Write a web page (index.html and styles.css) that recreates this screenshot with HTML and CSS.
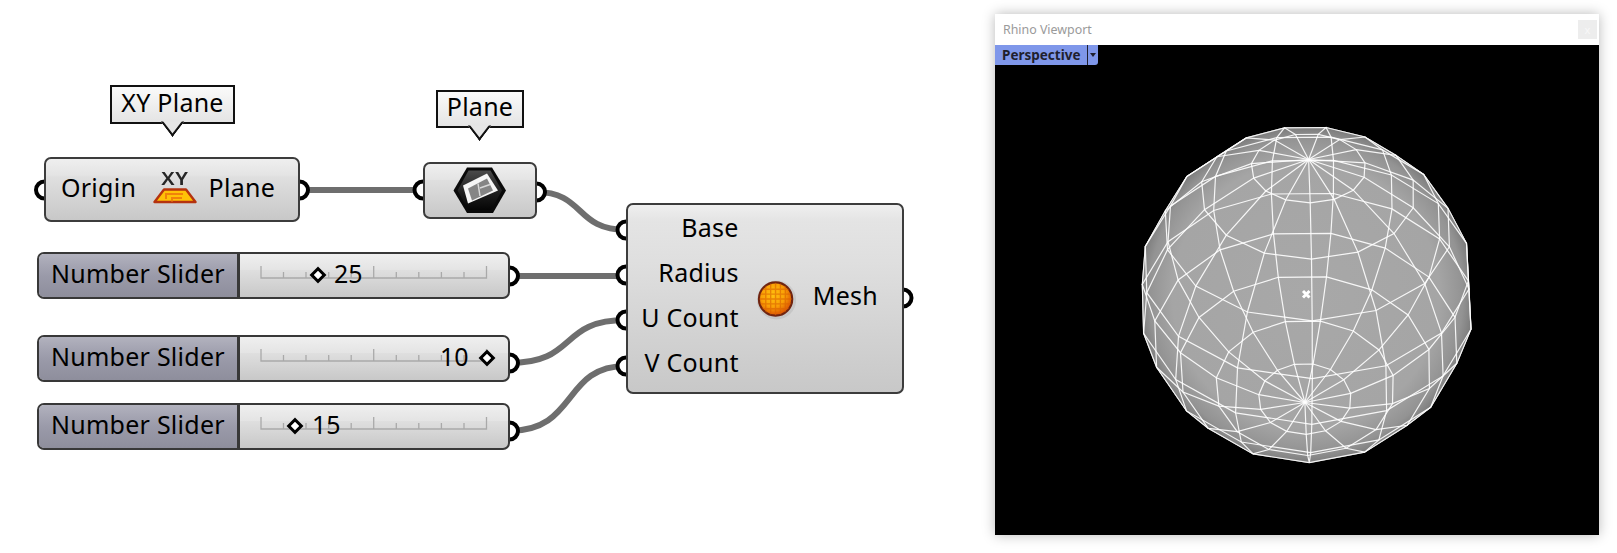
FILE: index.html
```html
<!DOCTYPE html>
<html lang="en">
<head>
<meta charset="utf-8">
<title>Grasshopper mesh sphere</title>
<link rel="stylesheet" href="styles.css">
</head>
<body>
<main class="canvas">
  <svg class="wires" width="960" height="553" viewBox="0 0 960 553">
    <g class="wire">
      <path d="M299 190H423"/>
      <path d="M536 192C585 192 575 230 626 230"/>
      <path d="M509 276H626"/>
      <path d="M509 363C578 363 558 320 626 320"/>
      <path d="M509 431C578 431 562 366 626 366"/>
    </g>
    <g class="grip">
      <circle cx="44.500" cy="190" r="8.500"/>
      <circle cx="299.500" cy="190" r="8.500"/>
      <circle cx="423" cy="190" r="8.500"/>
      <circle cx="536.500" cy="192" r="8.500"/>
      <circle cx="626" cy="230" r="8.500"/>
      <circle cx="626" cy="275" r="8.500"/>
      <circle cx="626" cy="320" r="8.500"/>
      <circle cx="626" cy="366" r="8.500"/>
      <circle cx="903" cy="298" r="8.500"/>
      <circle cx="509.500" cy="276" r="8.500"/>
      <circle cx="509.500" cy="363" r="8.500"/>
      <circle cx="509.500" cy="431" r="8.500"/>
    </g>
  </svg>

  <div class="tag tag-xy">XY Plane</div>
  <div class="tag tag-plane">Plane</div>

  <section class="node node-xy">
    <span class="lbl">Origin</span>
    <span class="xy-icon">
      <span class="xy-text">XY</span>
      <svg width="44" height="16" viewBox="0 0 44 16">
        <path d="M11 1.500H33L42.500 14H1.500Z" fill="#ffc107" stroke="#b5330f" stroke-width="2.400" stroke-linejoin="round"/>
        <path d="M13 11V6H30M19 13.500V10H29" fill="none" stroke="#f0820a" stroke-width="2"/>
      </svg>
    </span>
    <span class="lbl">Plane</span>
  </section>

  <section class="node node-plane">
    <svg width="54" height="50" viewBox="0 0 54 50">
      <defs>
        <linearGradient id="hexfill" x1="0" y1="0" x2="0" y2="1">
          <stop offset="0" stop-color="#4a4a4a"/>
          <stop offset="0.6" stop-color="#1c1c1c"/>
          <stop offset="1" stop-color="#050505"/>
        </linearGradient>
        <filter id="soft" x="-10%" y="-10%" width="120%" height="120%"><feGaussianBlur stdDeviation="0.600"/></filter>
      </defs>
      <path d="M14 1.500H39L53 24.500L40 47H14L0.500 24.500Z" fill="#0a0a0a"/>
      <path d="M15.500 4.500H37.500L49 24.500L38 44H15.500L4.500 24.500Z" fill="url(#hexfill)"/>
      <g filter="url(#soft)">
        <path d="M10 19.500L34 7.500L45 24.500L15 37.500Z" fill="#f6f6f6"/>
        <path d="M15 22.500L34 12.500L40 24.500L19 34.500Z" fill="#858585"/>
        <path d="M25 17.500L27 30M27 22L37 18.500" fill="none" stroke="#d8d8d8" stroke-width="1.500"/>
      </g>
    </svg>
  </section>

  <section class="node node-mesh">
    <div class="inputs">
      <span class="lbl">Base</span>
      <span class="lbl">Radius</span>
      <span class="lbl">U Count</span>
      <span class="lbl">V Count</span>
    </div>
    <svg class="mesh-icon" width="42" height="42" viewBox="0 0 42 42">
      <defs>
        <radialGradient id="orb" cx="42%" cy="38%" r="65%">
          <stop offset="0" stop-color="#ffc10f"/>
          <stop offset="0.55" stop-color="#f9a006"/>
          <stop offset="1" stop-color="#d84a03"/>
        </radialGradient>
        <filter id="gridblur" x="-10%" y="-10%" width="120%" height="120%"><feGaussianBlur stdDeviation="0.500"/></filter>
        <clipPath id="orbclip"><circle cx="21" cy="21" r="16.500"/></clipPath>
      </defs>
      <circle cx="22" cy="22" r="20" fill="#000" opacity="0.07"/>
      <circle cx="21" cy="21" r="17" fill="url(#orb)" stroke="#6f2410" stroke-width="2.200"/>
      <g clip-path="url(#orbclip)" filter="url(#gridblur)">
        <path d="M3 11H39M3 16H39M3 21H39M3 26H39M3 31H39M11 3V39M16 3V39M21 3V39M26 3V39M31 3V39" stroke="#d9610a" stroke-width="1.400" opacity="0.6"/>
      </g>
    </svg>
    <span class="lbl">Mesh</span>
  </section>

  <section class="node slider slider-a">
    <div class="slider-label">Number Slider</div>
    <div class="slider-track">
      <svg class="rail" width="230" height="16" viewBox="0 0 230 16"><path id="rail-ticks" d="M1 1V13H226.500V1M23.500 7V13M46 7V13M68.700 7V13M91.200 7V13M113.700 1V13M136.300 7V13M158.800 7V13M181.400 7V13M204 7V13"/></svg>
      <span class="knob knob-a"></span>
      <span class="value value-a">25</span>
    </div>
  </section>

  <section class="node slider slider-b">
    <div class="slider-label">Number Slider</div>
    <div class="slider-track">
      <svg class="rail" width="230" height="16" viewBox="0 0 230 16"><use href="#rail-ticks"/></svg>
      <span class="knob knob-b"></span>
      <span class="value value-b">10</span>
    </div>
  </section>

  <section class="node slider slider-c">
    <div class="slider-label">Number Slider</div>
    <div class="slider-track">
      <svg class="rail" width="230" height="16" viewBox="0 0 230 16"><use href="#rail-ticks"/></svg>
      <span class="knob knob-c"></span>
      <span class="value value-c">15</span>
    </div>
  </section>

  <section class="viewport">
    <header class="vp-title">
      <span>Rhino Viewport</span>
      <span class="vp-close">x</span>
    </header>
    <div class="vp-body">
      <div class="vp-tab"><span>Perspective</span><span class="vp-caret"></span></div>
      <svg id="sphere" class="vp-sphere" width="604" height="490" viewBox="995 45 604 490"></svg>
    </div>
  </section>
</main>
<script src="sphere.js"></script>
</body>
</html>
```
FILE: styles.css
```css
* { box-sizing: border-box; }
html, body { margin: 0; background: #fff; }
body { font-family: "Noto Sans", "Open Sans", sans-serif; color: #000; }

.canvas { position: relative; width: 1617px; height: 553px; overflow: hidden; background: #fff; }

.wires { position: absolute; left: 0; top: 0; }
.wire path { fill: none; stroke: #6e6e6e; stroke-width: 6; }
.grip circle { fill: #fff; stroke: #000; stroke-width: 4; }

.lbl { font-size: 25px; line-height: 30px; letter-spacing: 0.25px; white-space: nowrap; }

.tag {
  position: absolute; display: flex; align-items: center; justify-content: center;
  font-size: 25px; line-height: 30px; letter-spacing: 0.25px;
  background: linear-gradient(#fafafa, #e4e4e4);
  border: 2px solid #111;
}
.tag::after {
  content: ""; position: absolute; left: calc(50% - 1.500px); bottom: -7.500px; width: 15px; height: 15px;
  margin-left: -7.500px; transform: scaleY(1.300) rotate(45deg);
  background: #e6e6e6; border-right: 2px solid #111; border-bottom: 2px solid #111;
  clip-path: polygon(100% 0, 100% 100%, 0 100%);
}
.tag-xy { left: 110px; top: 85px; width: 125px; height: 39px; padding-bottom: 6px; }
.tag-plane { left: 436px; top: 90px; width: 88px; height: 38px; padding-bottom: 6px; }

.node {
  position: absolute; display: flex; align-items: center;
  border: 2px solid #3c3c3c; border-radius: 7px;
  background: linear-gradient(#efefef 0, #e4e4e4 16px, #dfdfdf 30%, #c8c8c8 100%);
}
.node-xy { left: 44px; top: 157px; width: 256px; height: 65px; padding: 0 23px 0 15px; justify-content: space-between; }
.node-xy > .lbl { padding-bottom: 6px; }
.xy-icon { display: flex; flex-direction: column; align-items: center; margin: -6px 0 0 5px; }
.xy-text { font-size: 21px; line-height: 19px; font-weight: 600; letter-spacing: 0.5px; color: #262626; transform: scaleY(0.88); }
.node-plane { left: 423px; top: 162px; width: 114px; height: 57px; justify-content: center; }

.node-mesh { left: 626px; top: 203px; width: 278px; height: 191px; padding-right: 24px; }
.inputs { display: flex; flex-direction: column; align-items: flex-end; width: 113px; gap: 15px; margin-top: -8px; }
.mesh-icon { margin: 0 17px 0 16px; }
.node-mesh > .lbl { margin-top: -7px; }

.slider { left: 37px; width: 473px; height: 47px; overflow: hidden; align-items: stretch; border-color: #383838; }
.slider-a { top: 252px; }
.slider-b { top: 335px; }
.slider-c { top: 403px; }
.slider-label {
  width: 201px; padding-left: 12px; display: flex; align-items: center;
  font-size: 25px; line-height: 30px; letter-spacing: 0.25px; padding-bottom: 6px; white-space: nowrap;
  background: linear-gradient(#b2b2be 0, #a4a4b2 12px, #9a9aa9 22px, #8e8e9c 100%);
  border-right: 3px solid #383838;
}
.slider-track { position: relative; flex: 1; }
.rail { position: absolute; left: 20px; top: 11px; }
.rail path, #rail-ticks { fill: none; stroke: #a9a9a9; stroke-width: 1.300; }
.knob {
  position: absolute; width: 12px; height: 12px; margin: -6px 0 0 -6px; top: 21px;
  background: #fff; border: 3px solid #000; transform: rotate(45deg);
}
.knob-a { left: 78px; }
.knob-b { left: 247px; }
.knob-c { left: 55px; }
.value { position: absolute; top: 4px; font-size: 25px; line-height: 30px; }
.value-a { left: 94px; }
.value-b { left: 200px; }
.value-c { left: 72px; }

.viewport {
  position: absolute; left: 995px; top: 14px; width: 604px; height: 521px;
  display: flex; flex-direction: column; background: #fff;
  box-shadow: 0 0 12px rgba(0, 0, 0, 0.28);
}
.vp-title {
  height: 31px; display: flex; align-items: center; justify-content: space-between;
  padding: 0 2px 0 8px; font-size: 12.400px; color: #9a9a9a;
}
.vp-close {
  width: 19px; height: 19px; background: #ededed; color: #f8f8f8;
  display: flex; align-items: center; justify-content: center; font-size: 11px;
}
.vp-body { position: relative; flex: 1; background: #000; }
.vp-tab {
  position: absolute; left: 0; top: 0; width: 103px; height: 20px; z-index: 1;
  display: flex; align-items: center; justify-content: space-between;
  padding-left: 7px; background: #7f97ea; color: #1f1f2e;
  font-size: 13.500px; font-weight: 700; border-bottom-right-radius: 3px;
}
.vp-caret { width: 11px; height: 20px; border-left: 1px solid #1f1f2e; position: relative; }
.vp-caret::after {
  content: ""; position: absolute; left: 2px; top: 8px;
  border: 3.500px solid transparent; border-top: 4px solid #1f1f2e;
}
.vp-sphere { position: absolute; left: 0; top: 0; }
```
FILE: sphere.js
```js
(function () {
  var NS = "http://www.w3.org/2000/svg";
  var svg = document.getElementById("sphere");
  var cx = 1306.5, cy = 294.5, R = 166, D = 1032;
  var t = 43.7 * Math.PI / 180, c = Math.cos(t), s = Math.sin(t);
  var ax = 0.011;
  var U = 15, V = 10, phi0 = 0.028;

  var axis = [ax, c, s];
  var e1 = [1, -ax * c, -ax * s];
  var e2 = [0, -s, c];

  function vertex(i, j) {
    var a = Math.PI * j / V, p = 2 * Math.PI * i / U + phi0;
    var sa = Math.sin(a), ca = Math.cos(a), cp = Math.cos(p), sp = Math.sin(p);
    var x = R * (ca * axis[0] + sa * (sp * e1[0] + cp * e2[0]));
    var y = R * (ca * axis[1] + sa * (sp * e1[1] + cp * e2[1]));
    var z = R * (ca * axis[2] + sa * (sp * e1[2] + cp * e2[2]));
    var k = D / (D - z);
    return (cx + x * k).toFixed(1) + "," + (cy - y * k).toFixed(1);
  }

  var defs = document.createElementNS(NS, "defs");
  defs.innerHTML =
    '<radialGradient id="shade" gradientUnits="userSpaceOnUse" cx="1306" cy="295" r="167">' +
    '<stop offset="0" stop-color="#a8a8a8"/><stop offset="0.8" stop-color="#a5a5a5"/>' +
    '<stop offset="0.94" stop-color="#939393"/><stop offset="1" stop-color="#7e7e7e"/></radialGradient>';
  svg.appendChild(defs);

  function poly(tag, pts, cls) {
    var el = document.createElementNS(NS, tag);
    el.setAttribute("points", pts.join(" "));
    el.setAttribute("class", cls);
    el.setAttribute("fill", cls === "f" ? "url(#shade)" : "none");
    el.setAttribute("stroke", cls === "f" ? "url(#shade)" : "#fff");
    el.setAttribute("stroke-width", cls === "f" ? "1" : "1.2");
    el.setAttribute("stroke-opacity", cls === "f" ? "1" : "0.9");
    svg.appendChild(el);
  }

  var i, j;
  for (j = 0; j < V; j++) {
    for (i = 0; i < U; i++) {
      poly("polygon", [vertex(i, j), vertex(i + 1, j), vertex(i + 1, j + 1), vertex(i, j + 1)], "f");
    }
  }
  for (i = 0; i < U; i++) {
    var m = [];
    for (j = 0; j <= V; j++) m.push(vertex(i, j));
    poly("polyline", m, "l");
  }
  for (j = 1; j < V; j++) {
    var r = [];
    for (i = 0; i <= U; i++) r.push(vertex(i, j));
    poly("polyline", r, "l");
  }

  var cross = document.createElementNS(NS, "path");
  cross.setAttribute("d", "M1303 291L1309.500 297.500M1309.500 291L1303 297.500");
  cross.setAttribute("stroke", "#fff");
  cross.setAttribute("stroke-width", "3");
  svg.appendChild(cross);
})();
```
